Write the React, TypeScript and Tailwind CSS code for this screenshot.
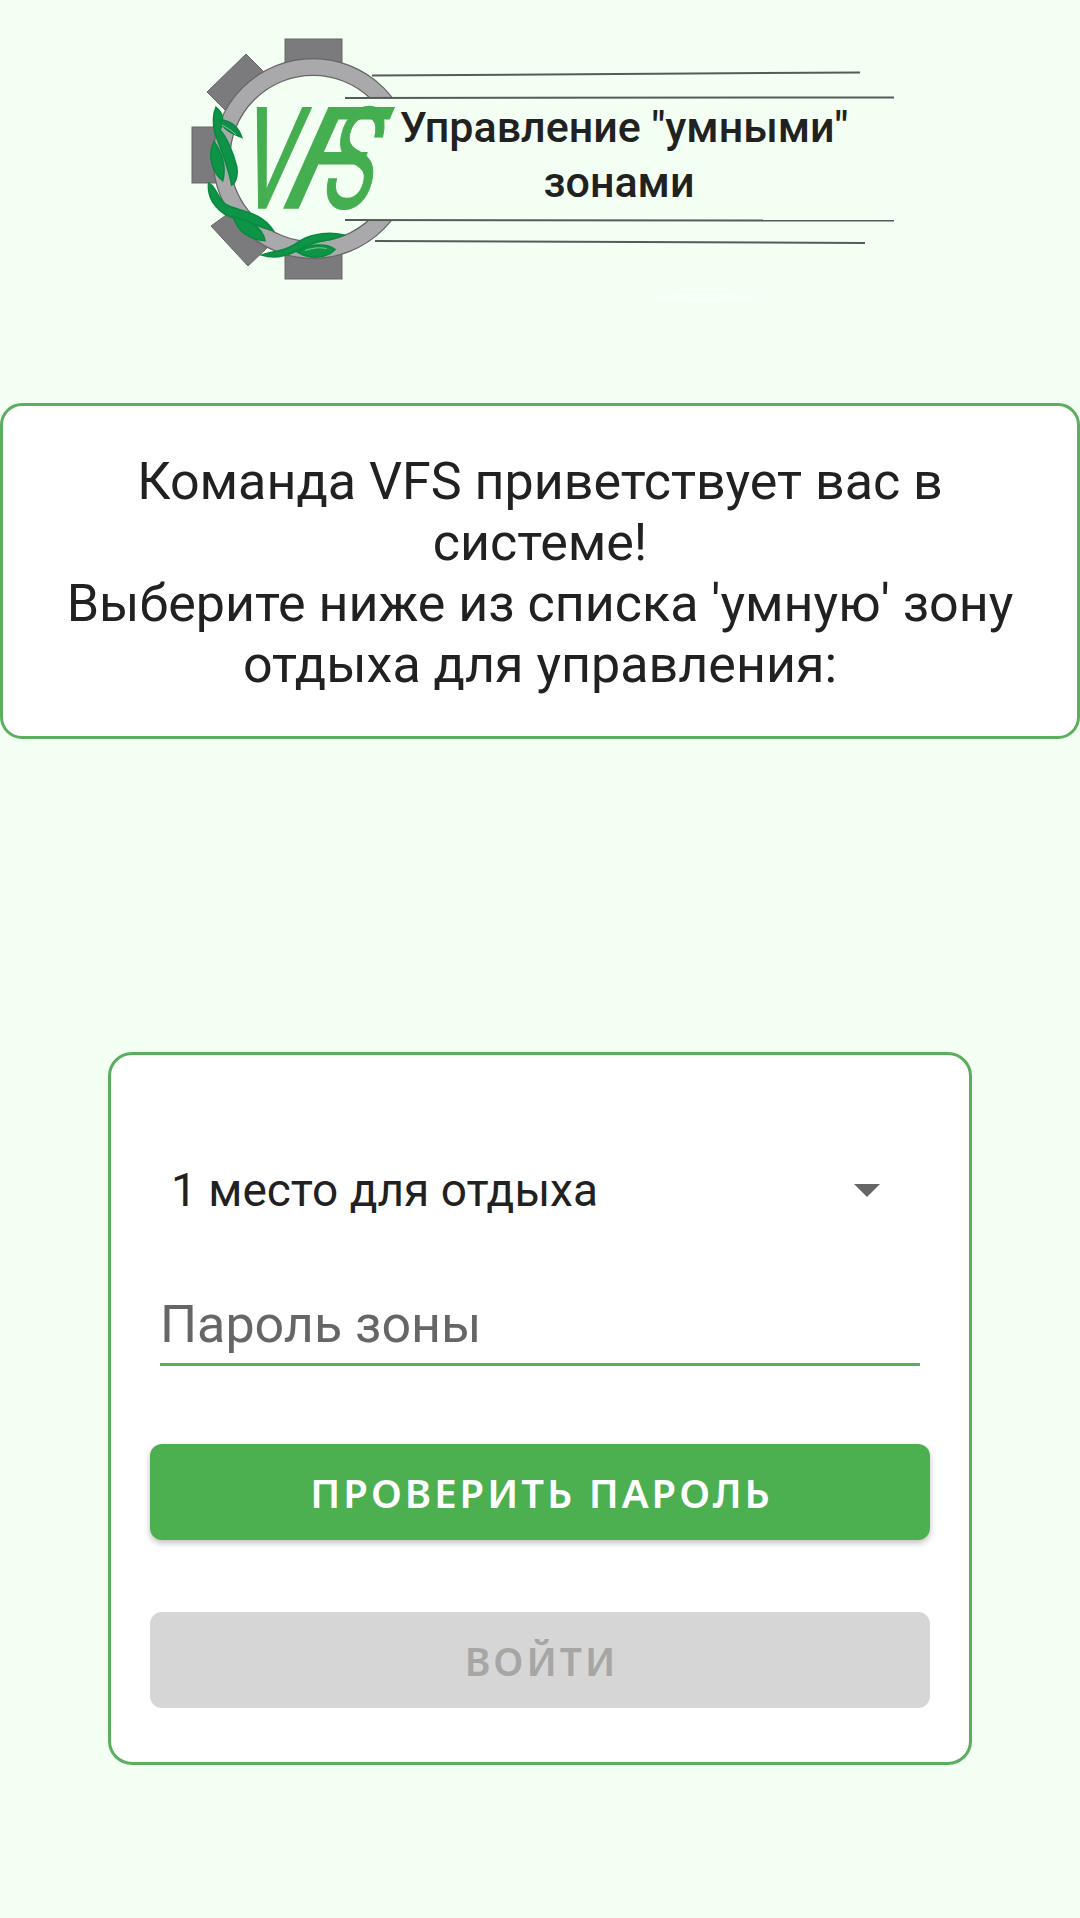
const rob = "font-['Roboto',sans-serif]";

function Logo() {
  return (
    <svg viewBox="180 30 720 260" className="block w-[720px] h-[260px] overflow-visible">
      {/* gear teeth */}
      <g fill="#7b7b7d" stroke="#666" strokeWidth="1">
        <rect x="285" y="39" width="57" height="30" />
        <rect x="192" y="127" width="30" height="56" />
        <rect x="285" y="245" width="57" height="34" />
        <polygon points="246,54 264,72 225,110 207,92" />
        <polygon points="229,213 211,226 248,266 267,248" />
      </g>
      {/* ring */}
      <circle cx="313" cy="158.5" r="91.5" fill="none" stroke="#666" strokeWidth="18" />
      <circle cx="313" cy="158.5" r="91.5" fill="none" stroke="#a9a9ab" strokeWidth="15.5" />
      <rect x="345" y="98" width="555" height="122" fill="#f4fff4" />
      {/* lines */}
      <g stroke="#555b58" fill="none" strokeWidth="2">
        <path d="M372 75.5 L860 72.5" />
        <path d="M345 98 L894 97.5" />
        <path d="M345 220 L894 220.5" />
        <path d="M375 241 L865 243" />
      </g>
      {/* leftover smudge under the logo */}
      <ellipse cx="705" cy="298" rx="52" ry="4" fill="#fff" opacity="0.4" />
      {/* VFS wordmark */}
      <g fontFamily="Roboto, sans-serif" fontWeight="400" fontSize="141" fill="#45ae50" stroke="#45ae50" strokeWidth="1.5">
        <text transform="translate(234 208) skewX(-12.4) scale(0.63 1)">V</text>
        <text transform="translate(272 208) skewX(-24) scale(1.05 1)">F</text>
        <text transform="translate(318 208) skewX(-14) scale(0.6 1)">S</text>
      </g>
      {/* vines, drawn in 3x crop coordinates */}
      <g transform="translate(170 20) scale(0.3333)" fill="#0d9446" stroke="#0a8a40" strokeWidth="5">
        <path d="M138 262 C160 280 165 300 150 330 C170 350 190 400 200 440 C205 470 195 490 185 495 C175 440 150 380 135 340 C128 310 128 285 138 262 Z" />
        <path d="M150 300 C180 300 205 320 215 352 C185 340 160 330 150 300 Z" fill="#128f47" />
        <path d="M132 365 C155 395 170 440 158 482 C130 460 110 410 132 365 Z" />
        <path d="M116 490 C135 495 140 530 165 552 C200 575 270 570 310 632 C270 625 235 600 195 595 C150 585 110 540 116 490 Z" />
        <path d="M190 590 C230 600 275 615 285 662 C245 660 205 640 190 590 Z" />
        <path d="M275 705 C330 690 355 690 395 660 C430 640 480 635 522 645 C480 665 440 660 405 680 C360 705 320 720 275 705 Z" />
        <path d="M380 695 C420 670 470 670 495 688 C470 715 420 720 380 695 Z" />
        <path d="M405 692 C430 682 455 682 470 686" fill="none" stroke="#7fc893" strokeWidth="3" />
        <path d="M155 315 C170 322 185 332 198 344" fill="none" stroke="#7fc893" strokeWidth="3" />
      </g>
    </svg>
  );
}

export default function App() {
  return (
    <div className={`w-[1080px] min-h-[1918px] bg-[#f4fff4] text-[#212121] overflow-hidden ${rob}`}>
      <div className="relative w-[720px] ml-[180px] pt-[30px]">
        <Logo />
        <div className="absolute left-[184px] top-[100px] w-[520px] text-center text-[43px] leading-[55px] font-medium whitespace-nowrap">
          Управление "умными"
          <br />
          <span className="pr-[10px]">зонами</span>
        </div>
      </div>

      <div className="mt-[113px] h-[336px] bg-white border-[3px] border-[#5cae5f] rounded-[22px] flex flex-col items-center justify-center text-center text-[52px] leading-[61px] px-10 pt-[4px]">
        <p>Команда VFS приветствует вас в</p>
        <p>системе!</p>
        <p>Выберите ниже из списка 'умную' зону</p>
        <p>отдыха для управления:</p>
      </div>

      <div className="mt-[313px] mx-[108px] h-[713px] bg-white border-[3px] border-[#5cae5f] rounded-[24px] px-[39px] flex flex-col">
        <div className="mt-[105px] ml-[21px] mr-[50px] h-[60px] flex items-center justify-between text-[46px]">
          <span>1 место для отдыха</span>
          <span className="w-0 h-0 border-x-[13px] border-x-transparent border-t-[13px] border-t-[#666]" />
        </div>
        <div className="mt-[74px] mx-[10px] h-[72px] border-b-[3px] border-[#5cae5f] text-[52px] leading-[62px] text-[#666]">
          Пароль зоны
        </div>
        <button className="mt-[78px] h-[96px] w-full bg-[#4caf50] rounded-[12px] shadow-[0_3px_6px_rgba(0,0,0,0.25)] text-white text-[40px] font-semibold tracking-[3px] pl-[3px] pt-[2px] font-['Noto_Sans',sans-serif]">
          ПРОВЕРИТЬ ПАРОЛЬ
        </button>
        <button className="mt-[72px] h-[96px] w-full bg-[#d6d6d6] rounded-[12px] text-[#a6a6a6] text-[39px] font-semibold tracking-[3px] pl-[3px] pt-[2px] font-['Noto_Sans',sans-serif]">
          ВОЙТИ
        </button>
      </div>
    </div>
  );
}
